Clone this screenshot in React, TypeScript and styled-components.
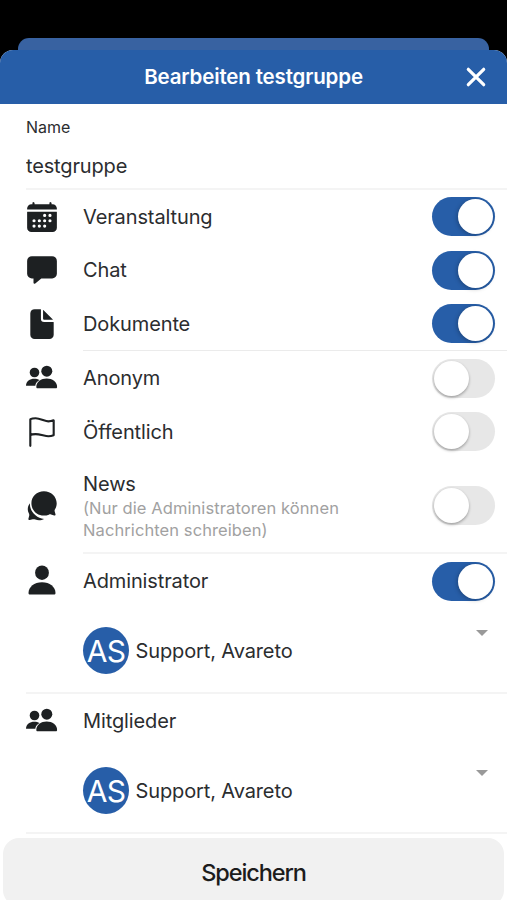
import React, { useState } from "react";
import styled, { createGlobalStyle } from "styled-components";
import { IoCalendar, IoChatbox, IoDocument, IoFlagOutline } from "react-icons/io5";

const GlobalStyle = createGlobalStyle`
  *, *::before, *::after { box-sizing: border-box; }
  body { margin: 0; background: #000; font-family: Inter, "Liberation Sans", sans-serif; color: #2b2d2f; }
  button { font: inherit; border: 0; padding: 0; color: inherit; cursor: pointer; }
`;

const Screen = styled.div`
  display: flex;
  flex-direction: column;
  height: 900px;
  padding-top: 38px;
  overflow: hidden;
  background: #000;
`;

const BackSheet = styled.div`
  flex: none;
  height: 12px;
  margin: 0 18px;
  border-radius: 11px 11px 0 0;
  background: #3862a1;
`;

const Sheet = styled.main`
  flex: 1;
  display: flex;
  flex-direction: column;
  overflow: hidden;
  border-radius: 13px 13px 0 0;
  background: #fff;
`;

const Header = styled.header`
  flex: none;
  display: grid;
  grid-template-columns: 60px 1fr 60px;
  align-items: center;
  height: 53.5px;
  background: #275ea8;
  color: #fff;
`;

const Title = styled.h1`
  grid-column: 2;
  margin: 0;
  text-align: center;
  font-size: 20.5px;
  font-weight: 600;
  letter-spacing: -0.15px;
  white-space: nowrap;
`;

const CloseButton = styled.button`
  display: grid;
  place-items: center;
  padding-right: 2px;
  background: none;
`;

const NameField = styled.label`
  flex: none;
  display: flex;
  flex-direction: column;
  height: 84.5px;
  padding: 13px 26px 0;
`;

const FieldLabel = styled.span`
  font-size: 16px;
  line-height: 21px;
`;

const FieldInput = styled.input`
  height: 30px;
  margin-top: 13px;
  padding: 0;
  border: 0;
  outline: 0;
  background: none;
  color: inherit;
  font: 20px/30px Inter, "Liberation Sans", sans-serif;
  letter-spacing: -0.15px;
`;

const Divider = styled.div<{ $inset?: boolean; $thin?: boolean }>`
  flex: none;
  height: ${(p) => (p.$thin ? 1 : 2)}px;
  margin-left: ${(p) => (p.$inset ? 83 : 26)}px;
  background: ${(p) => (p.$thin ? "#ebebeb" : "#f4f4f4")};
`;

const Row = styled.div<{ $height: number }>`
  flex: none;
  display: grid;
  grid-template-columns: 32px 1fr 63px;
  column-gap: 25px;
  align-items: center;
  height: ${(p) => p.$height}px;
  padding: 0 12px 0 26px;
`;

const IconBox = styled.span`
  display: flex;
  align-items: center;
  justify-content: center;
  color: #1d2022;

  svg { flex: none; }
`;

const Texts = styled.div<{ $lowered: boolean }>`
  display: flex;
  flex-direction: column;
  min-width: 0;
  padding-top: ${(p) => (p.$lowered ? 1 : 0)}px;
`;

const Label = styled.span`
  font-size: 20px;
  line-height: 26px;
  letter-spacing: -0.12px;
`;

const Hint = styled.span`
  font-size: 16.5px;
  line-height: 22px;
  letter-spacing: 0.09px;
  color: #a1a1a1;
  white-space: nowrap;
`;

const Track = styled.button<{ $on: boolean }>`
  display: flex;
  align-items: center;
  justify-content: ${(p) => (p.$on ? "flex-end" : "flex-start")};
  width: 63px;
  height: 39px;
  padding: 0 2px;
  border-radius: 20px;
  background: ${(p) => (p.$on ? "#275ea8" : "#e7e7e7")};
`;

const Knob = styled.span<{ $on: boolean }>`
  width: 35px;
  height: 35px;
  border-radius: 50%;
  background: #fff;
  box-shadow: ${(p) => (p.$on ? "-1px 1px 4px rgba(0,0,0,.25)" : "0 1.5px 3px rgba(0,0,0,.32)")};
`;

const MemberSelect = styled.div`
  flex: none;
  display: flex;
  align-items: center;
  height: 84px;
  padding: 1px 19px 0 83px;
`;

const Avatar = styled.span`
  flex: none;
  display: grid;
  place-items: center;
  width: 46px;
  height: 47px;
  margin-right: 6.5px;
  border-radius: 50%;
  background: #275ea8;
  color: #fff;
  font-size: 30px;
  line-height: 46px;
  letter-spacing: -0.6px;
`;

const Caret = styled.span`
  align-self: flex-start;
  margin: 21px 0 0 auto;
  border: 6px solid transparent;
  border-top-color: #999;
  border-bottom: 0;
`;

const SaveButton = styled.button`
  flex: none;
  height: 68px;
  margin: 4px 3px 0;
  border-radius: 16px;
  background: #f1f1f1;
  color: #1c1c1c;
  font-size: 23.5px;
  font-weight: 500;
  letter-spacing: -1.1px;
`;

const PeopleIcon = () => (
  <svg width="34" height="26" viewBox="1 0.5 34 26" fill="currentColor">
    <circle cx="10.500" cy="8" r="4.800" />
    <path d="M2 21.300c0-4.500 4-7.100 8.300-7.100 2 0 3.700.4 5.200 1.300-2.500 1.400-4 3.500-4.200 5.800z" />
    <circle cx="22.800" cy="6.700" r="5.500" />
    <path d="M12.300 22.400c0-5 4.800-8.400 10.400-8.400s10.400 3.400 10.400 8.400c0 .8-.5 1.300-1.200 1.300H13.500c-.7 0-1.200-.5-1.200-1.300z" />
  </svg>
);

const PersonIcon = () => (
  <svg width="32" height="32" viewBox="0 0.500 32 32" fill="currentColor">
    <ellipse cx="16" cy="8.200" rx="6.900" ry="7.300" />
    <path d="M2.500 28.500c0-6.200 5.800-10.800 13.500-10.800s13.500 4.600 13.500 10.800c0 1-.6 1.600-1.600 1.600H4.100c-1 0-1.600-.6-1.600-1.600z" />
  </svg>
);

const BubblesIcon = () => (
  <svg width="32" height="32" viewBox="0 -1 32 32" fill="currentColor">
    <path d="M3.900 13.300c-2.400 3-2.800 6.800-1.100 10 .6 1.100.6 1.800.2 3.100l-.6 2.400c-.2.800.5 1.400 1.300 1.200l3.100-.7c.9-.2 1.700-.1 2.500.3 2.900 1.200 6.200.9 8.800-.7C9.900 27.800 3.900 21.800 3.900 13.300z" />
    <path
      d="M17.900 1.200c7.200 0 12.800 5.400 12.800 12.100 0 2.300-.6 4.200-1.700 6-.5.8-.5 1.300-.3 2.100l.8 2.800c.2.800-.4 1.500-1.300 1.200l-3.200-.9c-.8-.3-1.400-.1-2.200.2-1.500.6-3.100.9-4.900.9-7.100 0-12.500-5.400-12.500-12.300S10.800 1.200 17.900 1.200z"
      stroke="#fff"
      strokeWidth="2.200"
      paintOrder="stroke"
    />
  </svg>
);

function Toggle({ initial, label }: { initial: boolean; label: string }) {
  const [on, setOn] = useState(initial);
  return (
    <Track type="button" role="switch" aria-checked={on} aria-label={label} $on={on} onClick={() => setOn(!on)}>
      <Knob $on={on} />
    </Track>
  );
}

interface SettingProps {
  icon: React.ReactNode;
  label: string;
  height: number;
  hint?: React.ReactNode;
  on?: boolean;
}

function Setting({ icon, label, height, hint, on }: SettingProps) {
  return (
    <Row $height={height}>
      <IconBox>{icon}</IconBox>
      <Texts $lowered={Boolean(hint)}>
        <Label>{label}</Label>
        {hint && <Hint>{hint}</Hint>}
      </Texts>
      {on !== undefined && <Toggle initial={on} label={label} />}
    </Row>
  );
}

function Member() {
  return (
    <MemberSelect>
      <Avatar>AS</Avatar>
      <Label>Support, Avareto</Label>
      <Caret />
    </MemberSelect>
  );
}

export default function App() {
  return (
    <>
      <GlobalStyle />
      <Screen>
        <BackSheet />
        <Sheet>
          <Header>
            <Title>Bearbeiten testgruppe</Title>
            <CloseButton type="button" aria-label="Schließen">
              <svg width="20" height="20" viewBox="0 0 20 20" fill="none" stroke="currentColor" strokeWidth="3.200" strokeLinecap="round">
                <path d="M2.300 2.300l15.400 15.400M17.700 2.300L2.300 17.700" />
              </svg>
            </CloseButton>
          </Header>
          <NameField>
            <FieldLabel>Name</FieldLabel>
            <FieldInput defaultValue="testgruppe" />
          </NameField>
          <Divider />
          <Setting icon={<IoCalendar size={34} />} label="Veranstaltung" height={53} on={true} />
          <Setting icon={<IoChatbox size={34} />} label="Chat" height={54} on={true} />
          <Setting icon={<IoDocument size={34} />} label="Dokumente" height={53} on={true} />
          <Divider $inset $thin />
          <Setting icon={<PeopleIcon />} label="Anonym" height={54} on={false} />
          <Setting icon={<IoFlagOutline size={34} />} label="Öffentlich" height={53} on={false} />
          <Setting
            icon={<BubblesIcon />}
            label="News"
            height={94}
            hint={<>(Nur die Administratoren können<br />Nachrichten schreiben)</>}
            on={false}
          />
          <Divider $inset />
          <Setting icon={<PersonIcon />} label="Administrator" height={54} on={true} />
          <Member />
          <Divider />
          <Setting icon={<PeopleIcon />} label="Mitglieder" height={54} />
          <Member />
          <Divider />
          <SaveButton type="button">Speichern</SaveButton>
        </Sheet>
      </Screen>
    </>
  );
}
